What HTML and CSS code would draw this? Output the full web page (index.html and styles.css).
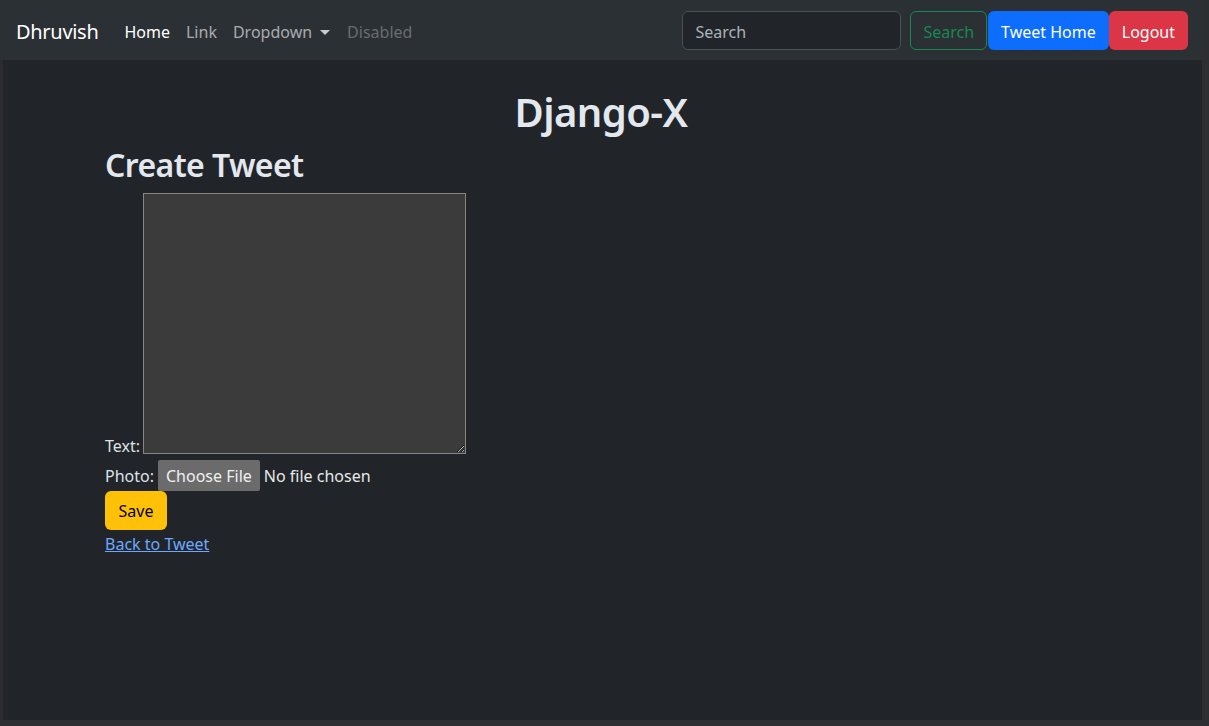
FILE: index.html
```html
<!DOCTYPE html>
<html lang="en">
<head>
<meta charset="utf-8">
<title>Django-X</title>
<link rel="stylesheet" href="styles.css">
</head>
<body>
<div class="app">
  <nav class="navbar">
    <div class="nav-left">
      <a class="brand" href="#">Dhruvish</a>
      <ul class="nav-links">
        <li><a class="nav-link active" href="#">Home</a></li>
        <li><a class="nav-link" href="#">Link</a></li>
        <li><a class="nav-link dropdown" href="#">Dropdown<span class="caret"></span></a></li>
        <li><a class="nav-link disabled" href="#">Disabled</a></li>
      </ul>
    </div>
    <div class="nav-right">
      <form class="search-form">
        <input class="search-input" type="search" placeholder="Search">
        <button class="btn btn-outline-success" type="button">Search</button>
      </form>
      <a class="btn btn-primary" href="#">Tweet Home</a>
      <a class="btn btn-danger" href="#">Logout</a>
    </div>
  </nav>
  <main class="main">
    <h1 class="title">Django-X</h1>
    <section class="content">
      <h2 class="subtitle">Create Tweet</h2>
      <form class="tweet-form">
        <div class="field field-text">
          <label for="t">Text:</label>
          <textarea id="t" class="textarea"></textarea>
        </div>
        <div class="field field-photo">
          <label>Photo:</label>
          <span class="file-btn">Choose File</span>
          <span class="file-name">No file chosen</span>
        </div>
        <button class="btn btn-warning" type="button">Save</button>
      </form>
      <a class="back-link" href="#">Back to Tweet</a>
    </section>
  </main>
</div>
</body>
</html>
```

FILE: styles.css
```css
* { box-sizing: border-box; }
html, body {
  margin: 0;
  padding: 0;
  background: #2c2e31;
}
body {
  font-family: "Noto Sans", "Open Sans", sans-serif;
  font-size: 16px;
  line-height: 1.5;
  color: #dee2e6;
}
.app {
  width: 1202px;
  height: 720px;
  background: #212529;
  display: flex;
  flex-direction: column;
  border-left: 3px solid #2a2c2f;
}
.navbar {
  height: 60px;
  margin-left: -3px;
  background: #2b3035;
  display: flex;
  align-items: center;
  justify-content: space-between;
  padding: 1px 14px 0 16px;
}
.nav-left { display: flex; align-items: center; padding-top: 3px; }
.brand {
  font-size: 20px;
  color: #fff;
  text-decoration: none;
  margin-right: 18px;
  letter-spacing: -0.3px;
}
.nav-links {
  display: flex;
  list-style: none;
  margin: 0;
  padding: 0;
}
.nav-link {
  display: flex;
  align-items: center;
  padding: 8px 8px;
  color: rgba(255,255,255,0.6);
  text-decoration: none;
}
.nav-link.active { color: #fff; }
.nav-link.disabled { color: rgba(255,255,255,0.3); margin-left: 1px; }
.caret {
  display: inline-block;
  margin-left: 8px;
  border-top: 5px solid rgba(255,255,255,0.75);
  border-left: 5px solid transparent;
  border-right: 5px solid transparent;
}
.nav-right { display: flex; align-items: center; }
.search-form { display: flex; align-items: center; margin-right: 1px; }
.search-input {
  width: 219px;
  height: 39px;
  margin-right: 9px;
  padding: 7px 12px 5px;
  background: #212529;
  border: 1px solid #495057;
  border-radius: 6px;
  color: #dee2e6;
  font: inherit;
}
.search-input::placeholder { color: rgba(222,226,230,0.75); }
.btn {
  display: inline-flex;
  align-items: center;
  justify-content: center;
  height: 39px;
  padding: 3px 12px 0;
  border: 1px solid transparent;
  border-radius: 6px;
  font: inherit;
  text-decoration: none;
  cursor: pointer;
}
.btn-outline-success {
  color: #198754;
  border-color: #198754;
  background: transparent;
}
.btn-primary { background: #0d6efd; color: #fff; }
.btn-danger { background: #dc3545; color: #fff; }
.btn-warning { background: #ffc107; color: #000; }
.main {
  flex: 1;
}
.title {
  margin: 28px 0 0;
  text-align: center;
  font-size: 40px;
  font-weight: 600;
  line-height: 1.2;
  color: #e3e8ef;
  padding-right: 3px;
  letter-spacing: -0.6px;
}
.content { padding-left: 102px; }
.subtitle {
  margin: 10px 0 9px;
  font-size: 32px;
  font-weight: 600;
  line-height: 1.2;
  color: #e3e8ef;
  letter-spacing: -0.6px;
}
.tweet-form { display: flex; flex-direction: column; align-items: flex-start; }
.field { display: flex; align-items: flex-end; }
.field label { margin-right: 3px; line-height: 16px; }
.textarea {
  width: 323px;
  height: 261px;
  background: #3b3b3b;
  border: 1px solid #858585;
  border-radius: 0;
  resize: both;
  margin: 0;
}
.field-photo { align-items: center; margin-top: 6px; }
.field-photo label { margin-right: 4px; }
.file-btn {
  display: inline-flex;
  align-items: center;
  height: 31px;
  padding: 1px 8px 0;
  background: #6b6b6b;
  color: #f0f0f0;
  border-radius: 2px;
  margin-right: 4px;
}
.file-name { color: #e8e8e8; }
.btn-warning { margin-top: 0; height: 39px; width: 62px; padding-top: 1px; }
.back-link {
  display: inline-block;
  margin-top: 2px;
  color: #6ea8fe;
  text-decoration: underline;
}
```
